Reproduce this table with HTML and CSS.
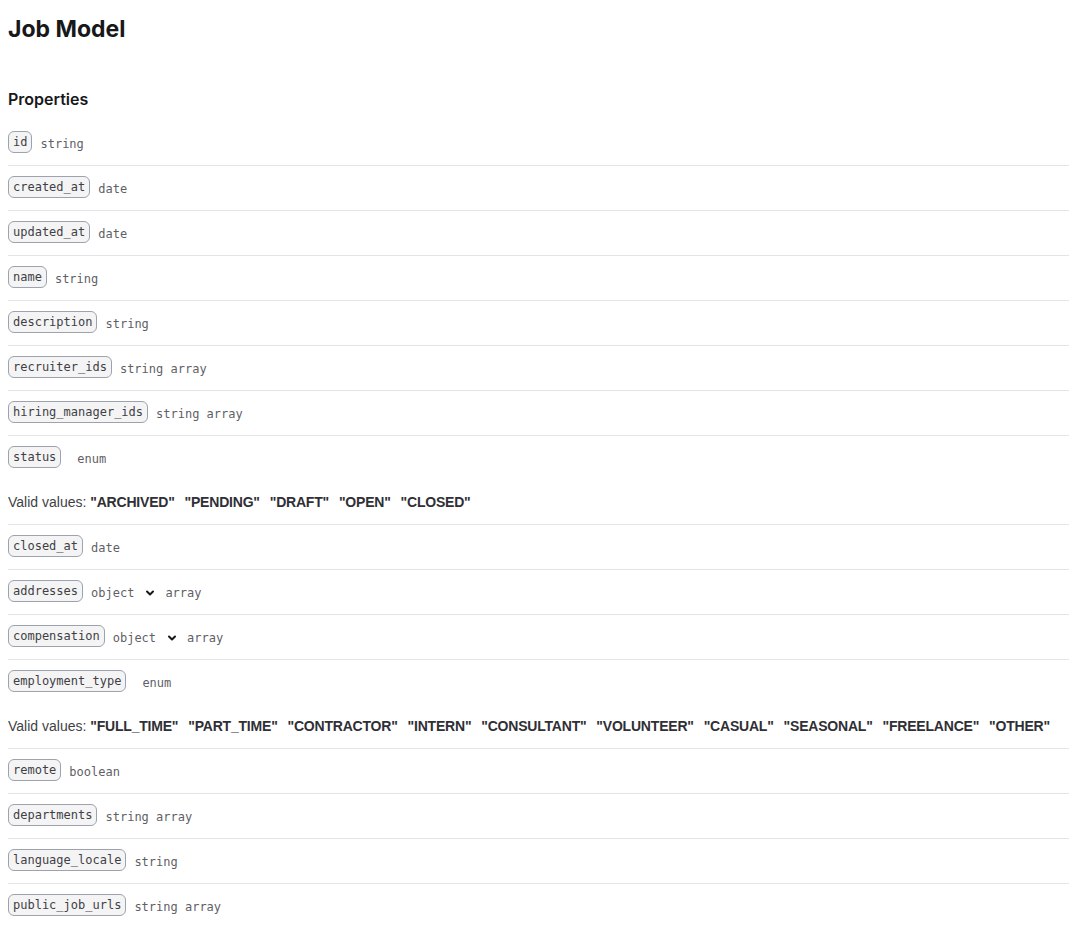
FILE: index.html
```html
<!DOCTYPE html>
<html>
<head>
    <title>Job Model</title>
    <link rel="stylesheet" href="styles.css">
</head>
<body>
    <div class="container">
        <h1>Job Model</h1>
        <h2>Properties</h2>

        <div class="props">
            <div class="prop">
                <div class="prop-head"><span class="name">id</span><span class="type">string</span></div>
            </div>
            <div class="prop">
                <div class="prop-head"><span class="name">created_at</span><span class="type">date</span></div>
            </div>
            <div class="prop">
                <div class="prop-head"><span class="name">updated_at</span><span class="type">date</span></div>
            </div>
            <div class="prop">
                <div class="prop-head"><span class="name">name</span><span class="type">string</span></div>
            </div>
            <div class="prop">
                <div class="prop-head"><span class="name">description</span><span class="type">string</span></div>
            </div>
            <div class="prop">
                <div class="prop-head"><span class="name">recruiter_ids</span><span class="type">string array</span></div>
            </div>
            <div class="prop">
                <div class="prop-head"><span class="name">hiring_manager_ids</span><span class="type">string array</span></div>
            </div>
            <div class="prop">
                <div class="prop-head"><span class="name">status</span><span class="type enum">enum</span></div>
                <div class="values">Valid values: <b>"ARCHIVED"</b> <b>"PENDING"</b> <b>"DRAFT"</b> <b>"OPEN"</b> <b>"CLOSED"</b></div>
            </div>
            <div class="prop">
                <div class="prop-head"><span class="name">closed_at</span><span class="type">date</span></div>
            </div>
            <div class="prop">
                <div class="prop-head">
                    <span class="name">addresses</span>
                    <span class="type">object</span>
                    <svg class="chevron" width="12" height="12" viewBox="0 0 12 12"><path d="M3 4.5 6 7.5 9 4.5" fill="none" stroke="#18181b" stroke-width="2" stroke-linecap="round" stroke-linejoin="round"/></svg>
                    <span class="type tight">array</span>
                </div>
            </div>
            <div class="prop">
                <div class="prop-head">
                    <span class="name">compensation</span>
                    <span class="type">object</span>
                    <svg class="chevron" width="12" height="12" viewBox="0 0 12 12"><path d="M3 4.5 6 7.5 9 4.5" fill="none" stroke="#18181b" stroke-width="2" stroke-linecap="round" stroke-linejoin="round"/></svg>
                    <span class="type tight">array</span>
                </div>
            </div>
            <div class="prop">
                <div class="prop-head"><span class="name">employment_type</span><span class="type enum">enum</span></div>
                <div class="values">Valid values: <b>"FULL_TIME"</b> <b>"PART_TIME"</b> <b>"CONTRACTOR"</b> <b>"INTERN"</b> <b>"CONSULTANT"</b> <b>"VOLUNTEER"</b> <b>"CASUAL"</b> <b>"SEASONAL"</b> <b>"FREELANCE"</b> <b>"OTHER"</b></div>
            </div>
            <div class="prop">
                <div class="prop-head"><span class="name">remote</span><span class="type">boolean</span></div>
            </div>
            <div class="prop">
                <div class="prop-head"><span class="name">departments</span><span class="type">string array</span></div>
            </div>
            <div class="prop">
                <div class="prop-head"><span class="name">language_locale</span><span class="type">string</span></div>
            </div>
            <div class="prop">
                <div class="prop-head"><span class="name">public_job_urls</span><span class="type">string array</span></div>
            </div>
        </div>
    </div>
</body>
</html>
```

FILE: styles.css
```css
body {
    margin: 0;
    font-family: Inter, "Noto Sans", sans-serif;
    color: #18181b;
    background-color: white;
}
.container {
    padding: 14px 0 0 8px;
}
h1 {
    margin: 0;
    font-size: 23px;
    line-height: 30px;
    font-weight: 700;
}
h2 {
    margin: 43px 0 0;
    font-size: 16px;
    line-height: 24px;
    font-weight: 600;
}
.props {
    margin-top: 10px;
}
.prop {
    padding: 10px 0 12px;
    border-bottom: 1px solid #e4e4e7;
}
.prop:last-child {
    border-bottom: none;
}
.prop-head {
    display: flex;
    align-items: center;
    height: 22px;
}
.name {
    font-family: "DejaVu Sans Mono", monospace;
    font-size: 12px;
    line-height: 20px;
    color: #3f3f46;
    background-color: #f4f4f5;
    border: 1px solid #9ca3af;
    border-radius: 6px;
    padding: 0 4px;
}
.type {
    font-family: "DejaVu Sans Mono", monospace;
    font-size: 12px;
    color: #5f5f67;
    margin-left: 8px;
    padding-top: 3px;
}
.type.enum {
    margin-left: 16px;
}
.type.tight {
    margin-left: 9px;
}
.chevron {
    margin-left: 10px;
    margin-top: 3px;
}
.values {
    margin-top: 24px;
    font-family: "Liberation Sans", Arial, sans-serif;
    font-size: 14px;
    line-height: 20px;
    color: #3f3f46;
    white-space: nowrap;
}
.values b {
    font-weight: 700;
    color: #2f2f35;
    margin-right: 6px;
    letter-spacing: -0.2px;
}
```
